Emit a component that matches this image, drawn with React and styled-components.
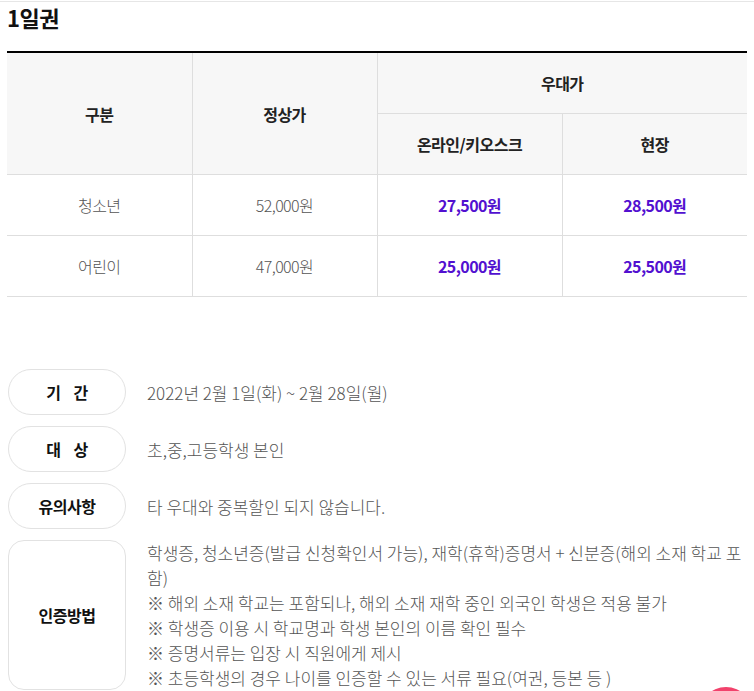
import React from "react";
import styled, { createGlobalStyle } from "styled-components";

const rows = [
  { name: "청소년", normal: "52,000원", online: "27,500원", site: "28,500원" },
  { name: "어린이", normal: "47,000원", online: "25,000원", site: "25,500원" },
];

const notes = [
  "학생증, 청소년증(발급 신청확인서 가능), 재학(휴학)증명서 + 신분증(해외 소재 학교 포함)",
  "※ 해외 소재 학교는 포함되나, 해외 소재 재학 중인 외국인 학생은 적용 불가",
  "※ 학생증 이용 시 학교명과 학생 본인의 이름 확인 필수",
  "※ 증명서류는 입장 시 직원에게 제시",
  "※ 초등학생의 경우 나이를 인증할 수 있는 서류 필요(여권, 등본 등 )",
];

function App() {
  return (
    <>
      <GlobalStyle />
      <Page>
        <Title>1일권</Title>
        <PriceTable>
          <thead>
            <tr>
              <Th rowSpan={2}>구분</Th>
              <Th rowSpan={2}>정상가</Th>
              <Th colSpan={2}>우대가</Th>
            </tr>
            <tr>
              <Th>온라인/키오스크</Th>
              <Th>현장</Th>
            </tr>
          </thead>
          <tbody>
            {rows.map((r) => (
              <tr key={r.name}>
                <Td>{r.name}</Td>
                <Td>{r.normal}</Td>
                <Td $accent>{r.online}</Td>
                <Td $accent>{r.site}</Td>
              </tr>
            ))}
          </tbody>
        </PriceTable>

        <InfoList>
          <InfoRow>
            <Label $wide>기 간</Label>
            <InfoText>2022년 2월 1일(화) ~ 2월 28일(월)</InfoText>
          </InfoRow>
          <InfoRow>
            <Label $wide>대 상</Label>
            <InfoText>초,중,고등학생 본인</InfoText>
          </InfoRow>
          <InfoRow>
            <Label>유의사항</Label>
            <InfoText>타 우대와 중복할인 되지 않습니다.</InfoText>
          </InfoRow>
          <InfoRow>
            <Label $tall>인증방법</Label>
            <InfoText>
              {notes.map((n) => (
                <p key={n}>{n}</p>
              ))}
            </InfoText>
          </InfoRow>
        </InfoList>
      </Page>
      <FloatButton aria-label="top" />
    </>
  );
}

const GlobalStyle = createGlobalStyle`
  html, body {
    margin: 0;
    background: #fff;
    font-family: "Noto Sans CJK KR", "Noto Sans", sans-serif;
  }
  p {
    margin: 0;
  }
`;

const Page = styled.main`
  margin-top: 1px;
  border-top: 1px solid #e6e6e6;
  padding: 0 7px 0 7px;
`;

const Title = styled.h2`
  margin: 0;
  height: 49px;
  font-size: 22px;
  line-height: 30px;
  font-weight: 700;
  color: #111;
  letter-spacing: -0.5px;
`;

const PriceTable = styled.table`
  width: 740px;
  border-collapse: collapse;
  table-layout: fixed;
  border-top: 2px solid #000;
`;

const Th = styled.th`
  height: 60px;
  padding: 0;
  background: #f7f7f7;
  border: 1px solid #dedede;
  border-top: 0;
  font-size: 16px;
  font-weight: 700;
  color: #222;
  letter-spacing: -0.5px;

  &:first-child {
    border-left: 0;
  }
  &:last-child {
    border-right: 0;
  }
`;

const Td = styled.td`
  height: 60px;
  padding: 0;
  text-align: center;
  border: 1px solid #dedede;
  border-top: 0;
  font-size: 16px;
  font-weight: ${({ $accent }) => ($accent ? 700 : 300)};
  color: ${({ $accent }) => ($accent ? "#5210d0" : "#555")};
  letter-spacing: -0.6px;

  &:first-child {
    border-left: 0;
  }
  &:last-child {
    border-right: 0;
  }
`;

const InfoList = styled.section`
  display: flex;
  flex-direction: column;
  gap: 11px;
  margin-top: 72px;
  padding-left: 1px;
`;

const InfoRow = styled.div`
  display: flex;
  align-items: stretch;
  gap: 21px;
`;

const Label = styled.div`
  flex: 0 0 118px;
  box-sizing: border-box;
  min-height: 46px;
  display: flex;
  align-items: center;
  justify-content: center;
  border: 1px solid #e2e2e2;
  border-radius: ${({ $tall }) => ($tall ? "16px" : "23px")};
  font-size: 16px;
  font-weight: 700;
  color: #111;
  word-spacing: ${({ $wide }) => ($wide ? "10px" : "0")};
  letter-spacing: -0.5px;
`;

const InfoText = styled.div`
  flex: 1;
  display: flex;
  flex-direction: column;
  justify-content: center;
  font-size: 17px;
  font-weight: 300;
  line-height: 25px;
  color: #555;
  letter-spacing: 0;
`;

const FloatButton = styled.button`
  position: fixed;
  right: 0;
  bottom: -52px;
  width: 56px;
  height: 56px;
  border: 0;
  border-radius: 50%;
  background: #f2426c;
  padding: 0;
`;

export default App;
